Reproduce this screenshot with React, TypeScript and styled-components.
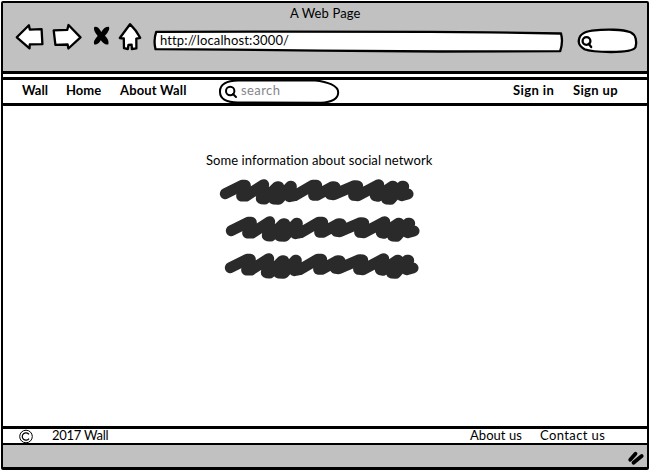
import React from "react";
import styled, { createGlobalStyle } from "styled-components";

const GlobalStyle = createGlobalStyle`
  * { box-sizing: border-box; }
  body { margin: 0; background: #fff; }
`;

const Page = styled.div`
  width: 650px;
  height: 471px;
  padding: 1px 1px 1px;
  display: flex;
  flex-direction: column;
  overflow: hidden;
  background: #fff;
  color: #000;
  font: 13px/16px Lato, sans-serif;
`;

const Frame = styled.div`
  height: 469px;
  display: flex;
  flex-direction: column;
  border: solid #000;
  border-width: 2px 2px 3px;
  border-radius: 2px;
`;

const Chrome = styled.header`
  height: 71px;
  flex: none;
  background: #c1c1c1;
  border-bottom: 3px solid #000;
`;

const TitleRow = styled.div`
  height: 20px;
  padding: 2px 0 0 287px;
`;

const ToolRow = styled.div`
  display: flex;
  height: 36px;
  align-items: flex-start;
  padding-left: 11px;
`;

const Drawing = styled.svg<{ $ml?: number; $mt?: number }>`
  display: block;
  flex: none;
  overflow: visible;
  margin-left: ${(p) => p.$ml ?? 0}px;
  margin-top: ${(p) => p.$mt ?? 0}px;
`;

const Field = styled.div<{ $w: number; $h: number; $ml: number; $mt?: number }>`
  position: relative;
  display: flex;
  align-items: center;
  flex: none;
  width: ${(p) => p.$w}px;
  height: ${(p) => p.$h}px;
  margin-left: ${(p) => p.$ml}px;
  margin-top: ${(p) => p.$mt ?? 0}px;
`;

const Outline = styled.svg`
  position: absolute;
  inset: 0;
  width: 100%;
  height: 100%;
  overflow: visible;
`;

const Label = styled.span<{ $w: number; $ml?: number; $ls?: number; $bold?: boolean; $muted?: boolean }>`
  position: relative;
  display: block;
  flex: none;
  white-space: nowrap;
  width: ${(p) => p.$w}px;
  margin-left: ${(p) => p.$ml ?? 0}px;
  letter-spacing: ${(p) => p.$ls ?? 0}px;
  font-weight: ${(p) => (p.$bold ? 700 : 400)};
  color: ${(p) => (p.$muted ? "#85858b" : "#000")};
`;

const Spacer = styled.div`
  flex: 1;
`;

const NavBar = styled.nav`
  height: 29px;
  flex: none;
  display: flex;
  align-items: center;
  margin: 3px -2px 0;
  padding: 0 28px 0 19px;
  border: solid #000;
  border-width: 3px 2px;
  border-radius: 3px;

  ${Label} {
    padding-bottom: 3px;
  }
`;

const Content = styled.main`
  flex: 1;
  padding: 46px 0 0 203px;
`;

const Scribbles = styled.div`
  display: flex;
  flex-direction: column;
  gap: 8px;
  padding: 10px 0 0 12px;
`;

const Footer = styled.footer`
  height: 19px;
  flex: none;
  display: flex;
  align-items: center;
  margin: 0 -2px;
  padding: 0 41px 0 16px;
  border: solid #000;
  border-width: 3px 2px 2px;
  border-radius: 2px;

  ${Label} {
    padding-bottom: 2px;
  }
`;

const StatusBar = styled.div`
  height: 22px;
  flex: none;
  display: flex;
  justify-content: flex-end;
  padding: 6px 2px 0 0;
  background: #c1c1c1;
`;

const ink = {
  stroke: "#000",
  strokeWidth: 2.3,
  strokeLinejoin: "round" as const,
  strokeLinecap: "round" as const,
};

function Scribble({ shift = 0 }: { shift?: number }) {
  return (
    <Drawing $ml={shift} width="198" height="29" viewBox="54 99 594 87">
      <g fill="none" stroke="#2a2a2a" strokeLinejoin="round" strokeLinecap="round">
        <path
          strokeWidth="33"
          d="M76 146L126 121L136 121L125 153L138 153L191 119L184 161L194 162L232 125L236 125L221 162L236 163L271 124L274 124L268 155L284 152L338 121L350 121L341 151L350 151L398 125L405 126L391 148L401 149L464 122L473 123L461 151L474 152L536 119L526 152L533 154L577 124L580 124L560 162L572 163L606 124L611 124L605 152L624 147"
        />
      </g>
    </Drawing>
  );
}

export default function App() {
  return (
    <>
      <GlobalStyle />
      <Page>
        <Frame>
          <Chrome>
            <TitleRow>
              <Label $w={72} $ls={0.12}>A Web Page</Label>
            </TitleRow>
            <ToolRow>
              <Drawing $ml={2} width="28" height="28" viewBox="16 23 28 28">
                <path {...ink} fill="#fff" d="M16.8 37.3L28.9 25.2L29.8 29.6L41.6 29.2L42.4 44.1L29.8 44.4L29.5 48.3Z" />
              </Drawing>
              <Drawing $ml={9} width="28" height="28" viewBox="53 23 28 28">
                <path {...ink} fill="#fff" d="M53.7 30.4L67.3 29.8L68.5 25L80.5 37.4L68.4 48.5L67.6 44.5L55.4 44.9Z" />
              </Drawing>
              <Drawing $ml={11} width="20" height="28" viewBox="92 23 20 28">
                <path d="M94.2 27Q98 25.7 101.3 32Q104.3 26.5 108.8 26.8Q110.8 29.5 105 35.8Q109.3 40 108.4 44.2Q104.5 45.5 100.8 40.3Q97.5 45.5 94.2 44.4Q92.7 41 97.7 36Q93 30.5 94.2 27Z" />
              </Drawing>
              <Drawing $ml={7} width="22" height="28" viewBox="119 23 22 28">
                <path {...ink} fill="#fff" d="M130 24.2Q136 30 140.2 37.8L136.3 38.6L136.4 48.4L131.9 49L131.6 44.7L128.5 44.8L127.8 49L124 48.2L123.8 38.5L119.8 38Z" />
              </Drawing>
              <Field $w={410} $h={18} $ml={13} $mt={8}>
                <Outline viewBox="154 31 410 18">
                  <path {...ink} fill="#fff" d="M156.2 31.8L280 31.6L430 31.8L490 32.4L561 33.5Q563.3 42 560.2 51.2L440 51.5L320 50.6L230 49.7L155.5 49.2Q153.3 40 156.2 31.8Z" />
                </Outline>
                <Label $w={132} $ml={6} $ls={0.13}>http://localhost:3000/</Label>
              </Field>
              <Field $w={60} $h={25} $ml={14} $mt={6}>
                <Outline viewBox="578 29 60 25">
                  <path {...ink} fill="#fff" d="M578.8 42C578.6 35 583 32 592 30.7C606 29 623 29.3 630.5 32.3C636.3 35 637 42 635.5 47.2C634 51 622 52 611 52C596 51.8 589 51 584.5 49.2Q579 46 578.8 42Z" />
                  <circle {...ink} fill="none" cx="586.5" cy="41" r="3.9" />
                  <path {...ink} d="M588.6 43.8L591.2 47" />
                </Outline>
              </Field>
            </ToolRow>
          </Chrome>

          <NavBar>
            <Label $bold $w={44} $ls={0}>Wall</Label>
            <Label $bold $w={54} $ls={0}>Home</Label>
            <Label $bold $w={70} $ls={0.15}>About Wall</Label>
            <Field $w={120} $h={24} $ml={29}>
              <Outline viewBox="219 80 120 24">
                <path {...ink} strokeWidth="2" fill="#fff" d="M220 92C219.5 84 227 80.6 238 80.5L315 80.4C328 81.5 338.3 86 338.2 92.5C338 99.5 330 102.3 321 102.7L238 102.5C227 102.3 220 99 220 92Z" />
                <circle {...ink} strokeWidth="2" fill="none" cx="230.2" cy="91" r="4.2" />
                <path {...ink} strokeWidth="2" d="M233 94L236 97" />
              </Outline>
              <Label $muted $w={45} $ml={22} $ls={0.4}>search</Label>
            </Field>
            <Spacer />
            <Label $bold $w={60} $ls={0.4}>Sign in</Label>
            <Label $bold $w={46} $ls={0.35}>Sign up</Label>
          </NavBar>

          <Content>
            <Label $w={232} $ls={0.07}>Some information about social network</Label>
            <Scribbles>
              <Scribble />
              <Scribble shift={6} />
              <Scribble shift={5} />
            </Scribbles>
          </Content>

          <Footer>
            <Drawing width="15" height="15" viewBox="0.5 0 15 15">
              <circle cx="7.5" cy="7.5" r="6.3" fill="none" stroke="#000" />
              <path d="M10.5 5.4A3.7 3.7 0 1 0 10.5 9.6" fill="none" stroke="#000" strokeWidth="1.2" />
            </Drawing>
            <Label $w={60} $ml={18} $ls={-0.25}>2017 Wall</Label>
            <Spacer />
            <Label $w={70} $ls={0.05}>About us</Label>
            <Label $w={66} $ls={0.4}>Contact us</Label>
          </Footer>
          <StatusBar>
            <Drawing width="17" height="14" viewBox="628 451 17 14">
              <path {...ink} strokeWidth="3.8" d="M630.2 459.8L635.5 453.7M633.5 462.8L641.7 456" />
            </Drawing>
          </StatusBar>
        </Frame>
      </Page>
    </>
  );
}
